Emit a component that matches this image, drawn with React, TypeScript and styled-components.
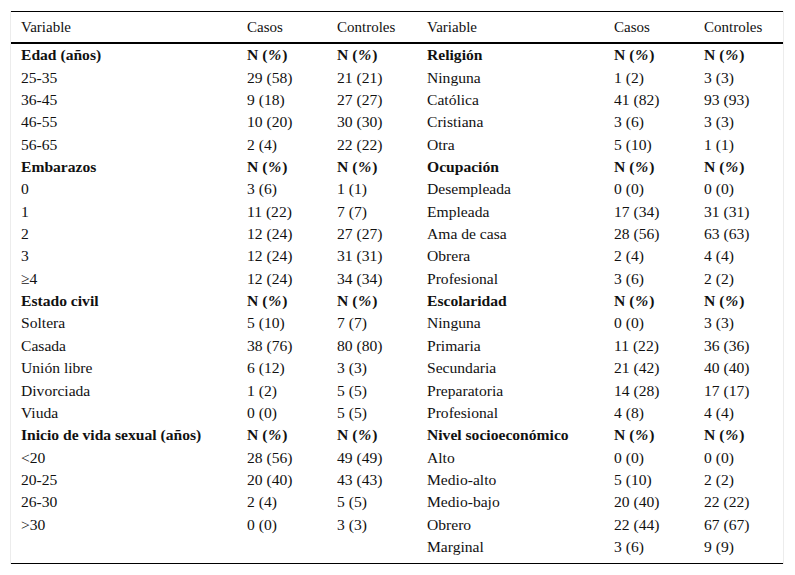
import React from "react";
import styled, { createGlobalStyle } from "styled-components";

type Row = { label: string; casos: string; controles: string; head?: boolean };

const H = (label: string): Row => ({ label, casos: "N", controles: "N", head: true });
const R = (label: string, casos: string, controles: string): Row => ({ label, casos, controles });

const left: Row[] = [
  H("Edad (años)"),
  R("25-35", "29 (58)", "21 (21)"),
  R("36-45", "9 (18)", "27 (27)"),
  R("46-55", "10 (20)", "30 (30)"),
  R("56-65", "2 (4)", "22 (22)"),
  H("Embarazos"),
  R("0", "3 (6)", "1 (1)"),
  R("1", "11 (22)", "7 (7)"),
  R("2", "12 (24)", "27 (27)"),
  R("3", "12 (24)", "31 (31)"),
  R("≥4", "12 (24)", "34 (34)"),
  H("Estado civil"),
  R("Soltera", "5 (10)", "7 (7)"),
  R("Casada", "38 (76)", "80 (80)"),
  R("Unión libre", "6 (12)", "3 (3)"),
  R("Divorciada", "1 (2)", "5 (5)"),
  R("Viuda", "0 (0)", "5 (5)"),
  H("Inicio de vida sexual (años)"),
  R("<20", "28 (56)", "49 (49)"),
  R("20-25", "20 (40)", "43 (43)"),
  R("26-30", "2 (4)", "5 (5)"),
  R(">30", "0 (0)", "3 (3)"),
];

const right: Row[] = [
  H("Religión"),
  R("Ninguna", "1 (2)", "3 (3)"),
  R("Católica", "41 (82)", "93 (93)"),
  R("Cristiana", "3 (6)", "3 (3)"),
  R("Otra", "5 (10)", "1 (1)"),
  H("Ocupación"),
  R("Desempleada", "0 (0)", "0 (0)"),
  R("Empleada", "17 (34)", "31 (31)"),
  R("Ama de casa", "28 (56)", "63 (63)"),
  R("Obrera", "2 (4)", "4 (4)"),
  R("Profesional", "3 (6)", "2 (2)"),
  H("Escolaridad"),
  R("Ninguna", "0 (0)", "3 (3)"),
  R("Primaria", "11 (22)", "36 (36)"),
  R("Secundaria", "21 (42)", "40 (40)"),
  R("Preparatoria", "14 (28)", "17 (17)"),
  R("Profesional", "4 (8)", "4 (4)"),
  H("Nivel socioeconómico"),
  R("Alto", "0 (0)", "0 (0)"),
  R("Medio-alto", "5 (10)", "2 (2)"),
  R("Medio-bajo", "20 (40)", "22 (22)"),
  R("Obrero", "22 (44)", "67 (67)"),
  R("Marginal", "3 (6)", "9 (9)"),
];

const serif = `"Liberation Serif", "Times New Roman", serif`;

const GlobalStyle = createGlobalStyle`
  html, body { margin: 0; padding: 0; background: #fff; }
  body { font-family: ${serif}; color: #111; }
`;

const Frame = styled.div`
  margin: 11px 0 0 10px;
  width: 772px;
  border-left: 1px solid #ececec;
  border-right: 1px solid #ececec;
`;

const Table = styled.table`
  width: 772px;
  border-collapse: collapse;
  table-layout: fixed;
  font-family: ${serif};
  color: #111;
  border-top: 1px solid #000;
  border-bottom: 1px solid #000;
`;

const HeadCell = styled.th`
  height: 30px;
  padding: 0 0 0 10px;
  text-align: left;
  font-family: ${serif};
  font-weight: normal;
  font-size: 15px;
  border-bottom: 2px solid #000;
  white-space: nowrap;
`;

const Cell = styled.td<{ $head?: boolean }>`
  height: 22.36px;
  padding: 0 0 0 10px;
  font-family: ${serif};
  font-size: 15.6px;
  line-height: 22px;
  font-weight: ${(p) => (p.$head ? "bold" : "normal")};
  white-space: nowrap;
  vertical-align: middle;
`;

const Spacer = styled.td`
  height: 5px;
  padding: 0;
`;

const Pct = styled.span`
  font-style: italic;
  margin: 0 1px;
`;

function Value({ text, head }: { text: string; head?: boolean }) {
  if (!head) return <>{text}</>;
  return (
    <>
      N (<Pct>%</Pct>)
    </>
  );
}

function Cells({ row }: { row?: Row }) {
  if (!row) {
    return (
      <>
        <Cell />
        <Cell />
        <Cell />
      </>
    );
  }
  return (
    <>
      <Cell $head={row.head}>{row.label}</Cell>
      <Cell $head={row.head}>
        <Value text={row.casos} head={row.head} />
      </Cell>
      <Cell $head={row.head}>
        <Value text={row.controles} head={row.head} />
      </Cell>
    </>
  );
}

export default function App() {
  const count = Math.max(left.length, right.length);
  return (
    <>
      <GlobalStyle />
      <Frame>
        <Table>
          <colgroup>
            <col style={{ width: 226 }} />
            <col style={{ width: 90 }} />
            <col style={{ width: 90 }} />
            <col style={{ width: 187 }} />
            <col style={{ width: 90 }} />
            <col style={{ width: 89 }} />
          </colgroup>
          <thead>
            <tr>
              <HeadCell>Variable</HeadCell>
              <HeadCell>Casos</HeadCell>
              <HeadCell>Controles</HeadCell>
              <HeadCell>Variable</HeadCell>
              <HeadCell>Casos</HeadCell>
              <HeadCell>Controles</HeadCell>
            </tr>
          </thead>
          <tbody>
            {Array.from({ length: count }, (_, i) => (
              <tr key={i}>
                <Cells row={left[i]} />
                <Cells row={right[i]} />
              </tr>
            ))}
            <tr>
              <Spacer colSpan={6} />
            </tr>
          </tbody>
        </Table>
      </Frame>
    </>
  );
}
